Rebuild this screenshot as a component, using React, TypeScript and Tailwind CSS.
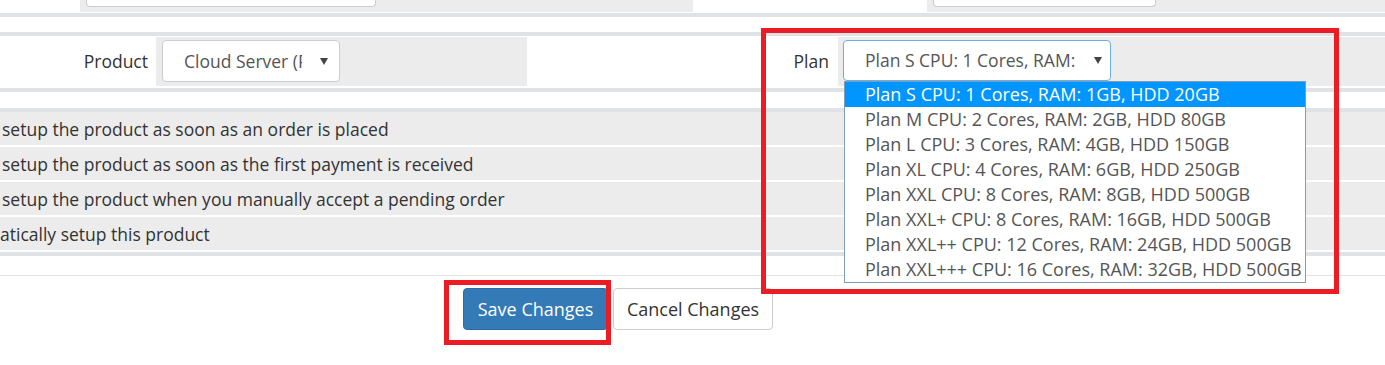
import React from "react";

const plans = [
  "Plan S CPU: 1 Cores, RAM: 1GB, HDD 20GB",
  "Plan M CPU: 2 Cores, RAM: 2GB, HDD 80GB",
  "Plan L CPU: 3 Cores, RAM: 4GB, HDD 150GB",
  "Plan XL CPU: 4 Cores, RAM: 6GB, HDD 250GB",
  "Plan XXL CPU: 8 Cores, RAM: 8GB, HDD 500GB",
  "Plan XXL+ CPU: 8 Cores, RAM: 16GB, HDD 500GB",
  "Plan XXL++ CPU: 12 Cores, RAM: 24GB, HDD 500GB",
  "Plan XXL+++ CPU: 16 Cores, RAM: 32GB, HDD 500GB",
];

const rows = [
  "setup the product as soon as an order is placed",
  "setup the product as soon as the first payment is received",
  "setup the product when you manually accept a pending order",
  "atically setup this product",
];

function Caret() {
  return (
    <svg width="8" height="7" viewBox="0 0 8 7" className="shrink-0">
      <path d="M0 0 L8 0 L4 7 Z" fill="#444" />
    </svg>
  );
}

export default function App() {
  return (
    <div className="relative w-[1385px] h-[365px] overflow-hidden bg-white font-['Open_Sans',sans-serif] text-[#333]">
      {/* Section A (partial top) */}
      <div className="flex h-[12px]">
        <div className="w-[80px]" />
        <div className="w-[613px] bg-[#ececec]">
          <div className="ml-[6px] w-[290px] h-[7px] bg-white border-x border-b border-[#cccccc] rounded-b-[4px]" />
        </div>
        <div className="w-[234px]" />
        <div className="flex-1 bg-[#ececec]">
          <div className="ml-[6px] w-[223px] h-[7px] bg-white border-x border-b border-[#cccccc] rounded-b-[4px]" />
        </div>
      </div>
      <div className="h-[1px]" />
      <div className="h-[4px] bg-[#dfe3e6]" />
      <div className="h-[15px]" />

      {/* Section B */}
      <div className="h-[4px] bg-[#dfe3e6]" />
      <div className="h-[1px]" />
      <div className="flex h-[49px]">
        <div className="w-[156px] flex items-center justify-end pr-[8px] text-[17.5px]">Product</div>
        <div className="w-[371px] bg-[#ececec] pt-[3px] pl-[6px]">
          <div className="w-[178px] h-[42px] bg-white border border-[#cccccc] rounded-[4px] flex items-center pl-[21px] pr-[11px] text-[17.5px] text-[#555]">
            <div className="w-[118px] overflow-hidden whitespace-nowrap">Cloud Server (Performance)</div>
            <div className="flex-1" />
            <Caret />
          </div>
        </div>
        <div className="w-[311px] flex items-center justify-end pr-[9px] text-[17.5px]">Plan</div>
        <div className="flex-1 bg-[#ececec] pt-[3px] pl-[5px]">
          <div className="w-[268px] h-[41px] bg-white border border-[#66afe9] rounded-[4px] flex items-center pl-[21px] pr-[8px] text-[17.5px] text-[#555]">
            <div className="whitespace-nowrap">Plan S CPU: 1 Cores, RAM:</div>
            <div className="flex-1" />
            <Caret />
          </div>
        </div>
      </div>
      <div className="h-[2px]" />
      <div className="h-[4px] bg-[#dfe3e6]" />
      <div className="h-[16px]" />

      {/* Section C */}
      <div className="h-[4px] bg-[#dfe3e6]" />
      <div className="flex flex-col gap-[2px]">
        {rows.map((r, i) => (
          <div key={i} className={`h-[33px] bg-[#ececec] flex items-center text-[17.5px] whitespace-nowrap pt-[1px] ${i === 3 ? "pl-[0px]" : "pl-[2px]"}`}>
            {r}
          </div>
        ))}
      </div>
      <div className="h-[2px]" />
      <div className="h-[4px] bg-[#dfe3e6]" />
      <div className="h-[19px]" />
      <div className="h-[1px] bg-[#e3e3e3]" />

      {/* Buttons */}
      <div className="flex pl-[463px] pt-[12px] gap-[5px]">
        <button className="w-[145px] h-[42px] bg-[#337ab7] border border-[#2e6da4] rounded-[4px] text-white text-[18px]">
          Save Changes
        </button>
        <button className="w-[160px] h-[42px] bg-white border border-[#cccccc] rounded-[4px] text-[#333] text-[18px]">
          Cancel Changes
        </button>
      </div>

      {/* Open dropdown list */}
      <div className="absolute left-[844px] top-[81px] w-[462px] bg-white border border-[#7f9db9]">
        {plans.map((p, i) => (
          <div
            key={i}
            className={`h-[25px] leading-[25px] pl-[20px] text-[18px] whitespace-nowrap ${i === 0 ? "bg-[#0095ff] text-white" : "text-[#555]"}`}
          >
            {p}
          </div>
        ))}
      </div>

      {/* Red annotation boxes */}
      <div className="absolute left-[761px] top-[28px] w-[578px] h-[266px] border-[5px] border-[#ed1c24]" />
      <div className="absolute left-[444px] top-[280px] w-[167px] h-[65px] border-[5px] border-[#ed1c24]" />
    </div>
  );
}
